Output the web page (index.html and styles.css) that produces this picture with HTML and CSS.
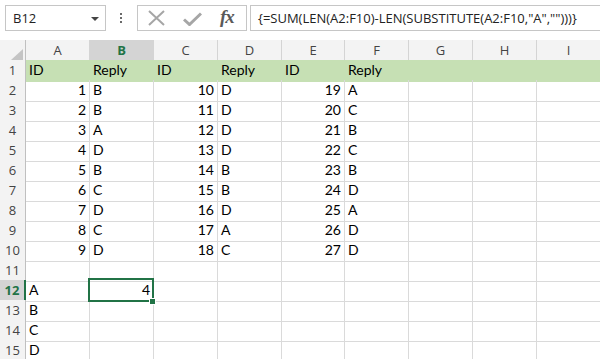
FILE: index.html
```html
<!DOCTYPE html>
<html lang="en">
  <head>
    <meta charset="UTF-8" />
    <title>Book1 - Excel</title>
    <link rel="stylesheet" href="styles.css">
  </head>
  <body>
    <div class="toolbar">
      <div class="name-box">
        <span>B12</span>
        <svg class="caret" width="8" height="4" viewBox="0 0 8 4"><path d="M0 0h8L4 4z" fill="#444"/></svg>
      </div>
      <div class="dots"><i></i><i></i><i></i></div>
      <div class="fx-box">
        <svg class="icon-x" width="17" height="16" viewBox="0 0 17 16">
          <path d="M1 1L16 15M16 1L1 15" stroke="#a6a6a6" stroke-width="2" fill="none"/>
        </svg>
        <svg class="icon-check" width="19" height="14" viewBox="0 0 19 14">
          <path d="M1 7.5L6.5 12.5L18 1.5" stroke="#a6a6a6" stroke-width="3" fill="none"/>
        </svg>
        <span class="fx">fx</span>
      </div>
      <div class="formula">{=SUM(LEN(A2:F10)-LEN(SUBSTITUTE(A2:F10,"A","")))}</div>
    </div>

    <div class="sheet">
      <div class="row head">
        <div class="corner"><svg width="12" height="11" viewBox="0 0 12 11"><path d="M12 0V11H0z" fill="#c4c4c4"/></svg></div>
        <div>A</div><div class="active">B</div><div>C</div><div>D</div><div>E</div><div>F</div><div>G</div><div>H</div><div>I</div>
      </div>
      <div class="row band">
        <div class="rh">1</div>
        <div>ID</div><div>Reply</div><div>ID</div><div>Reply</div><div>ID</div><div>Reply</div><div></div><div></div><div></div>
      </div>
      <div class="row">
        <div class="rh">2</div>
        <div class="n">1</div><div>B</div><div class="n">10</div><div>D</div><div class="n">19</div><div>A</div><div></div><div></div><div></div>
      </div>
      <div class="row">
        <div class="rh">3</div>
        <div class="n">2</div><div>B</div><div class="n">11</div><div>D</div><div class="n">20</div><div>C</div><div></div><div></div><div></div>
      </div>
      <div class="row">
        <div class="rh">4</div>
        <div class="n">3</div><div>A</div><div class="n">12</div><div>D</div><div class="n">21</div><div>B</div><div></div><div></div><div></div>
      </div>
      <div class="row">
        <div class="rh">5</div>
        <div class="n">4</div><div>D</div><div class="n">13</div><div>D</div><div class="n">22</div><div>C</div><div></div><div></div><div></div>
      </div>
      <div class="row">
        <div class="rh">6</div>
        <div class="n">5</div><div>B</div><div class="n">14</div><div>B</div><div class="n">23</div><div>B</div><div></div><div></div><div></div>
      </div>
      <div class="row">
        <div class="rh">7</div>
        <div class="n">6</div><div>C</div><div class="n">15</div><div>B</div><div class="n">24</div><div>D</div><div></div><div></div><div></div>
      </div>
      <div class="row">
        <div class="rh">8</div>
        <div class="n">7</div><div>D</div><div class="n">16</div><div>D</div><div class="n">25</div><div>A</div><div></div><div></div><div></div>
      </div>
      <div class="row">
        <div class="rh">9</div>
        <div class="n">8</div><div>C</div><div class="n">17</div><div>A</div><div class="n">26</div><div>D</div><div></div><div></div><div></div>
      </div>
      <div class="row">
        <div class="rh">10</div>
        <div class="n">9</div><div>D</div><div class="n">18</div><div>C</div><div class="n">27</div><div>D</div><div></div><div></div><div></div>
      </div>
      <div class="row">
        <div class="rh">11</div>
        <div></div><div></div><div></div><div></div><div></div><div></div><div></div><div></div><div></div>
      </div>
      <div class="row">
        <div class="rh active">12</div>
        <div>A</div><div class="n sel">4</div><div></div><div></div><div></div><div></div><div></div><div></div><div></div>
      </div>
      <div class="row">
        <div class="rh">13</div>
        <div>B</div><div></div><div></div><div></div><div></div><div></div><div></div><div></div><div></div>
      </div>
      <div class="row">
        <div class="rh">14</div>
        <div>C</div><div></div><div></div><div></div><div></div><div></div><div></div><div></div><div></div>
      </div>
      <div class="row">
        <div class="rh">15</div>
        <div>D</div><div></div><div></div><div></div><div></div><div></div><div></div><div></div><div></div>
      </div>
    </div>
  </body>
</html>
```

FILE: styles.css
```css
/* Basic styling */
body {
  margin: 0;
  padding: 0;
  background-color: #ffffff;
  font-family: "Open Sans", "Noto Sans", sans-serif;
  overflow: hidden;
  width: 600px;
  height: 359px;
}

/* formula bar */
.toolbar {
  display: flex;
  align-items: flex-start;
  height: 40px;
  padding: 5px 0 0 5px;
  box-sizing: border-box;
  background-color: #ffffff;
}

.name-box {
  width: 101px;
  height: 26px;
  box-sizing: border-box;
  border: 1px solid #c6c6c6;
  display: flex;
  align-items: center;
  justify-content: space-between;
  padding: 0 6px 0 7px;
  font-size: 13px;
  color: #222;
}

.caret {
  margin-top: 1px;
}

.dots {
  width: 3px;
  margin: 8px 14px 0 14px;
  display: flex;
  flex-direction: column;
  gap: 2px;
}

.dots i {
  display: block;
  width: 2px;
  height: 2px;
  background-color: #6a6a6a;
}

.fx-box {
  width: 110px;
  height: 26px;
  box-sizing: border-box;
  border: 1px solid #c6c6c6;
  display: flex;
  align-items: center;
  padding-left: 10px;
}

.icon-x {
  margin-right: 18px;
}

.icon-check {
  margin-right: 18px;
  margin-top: 2px;
}

.fx {
  font-family: "Liberation Serif", serif;
  font-style: italic;
  font-weight: bold;
  font-size: 19px;
  color: #5a5a5a;
  letter-spacing: -1px;
  margin-top: -2px;
}

.formula {
  flex: 1;
  height: 26px;
  box-sizing: border-box;
  border: 1px solid #c6c6c6;
  border-right: none;
  margin-left: 3px;
  padding-left: 7px;
  font-size: 13px;
  line-height: 24px;
  color: #222;
  white-space: nowrap;
}

/* grid */
.row {
  display: grid;
  grid-template-columns: 26px 64px 64px 64px 64px 63px 64px 64px 64px 64px;
  height: 20px;
}

.row > div {
  box-sizing: border-box;
  border-right: 1px solid #dadada;
  border-bottom: 1px solid #dadada;
  font-family: "Lato", "Liberation Sans", sans-serif;
  font-size: 14px;
  line-height: 20px;
  padding: 0 3px;
  color: #000;
  white-space: nowrap;
}

.row > .n {
  text-align: right;
  padding-right: 3px;
}

.head > div {
  background-color: #f3f3f3;
  border-bottom: 1px solid #c0c0c0;
  border-right: 1px solid #d4d4d4;
  font-family: "Open Sans", "Noto Sans", sans-serif;
  font-size: 13px;
  line-height: 21px;
  text-align: center;
  color: #444;
}

.head > .corner {
  border-right: 1px solid #c0c0c0;
  display: flex;
  align-items: flex-end;
  justify-content: flex-end;
  padding: 0 2px 2px 0;
}

.head > .active {
  background-color: #d4d4d4;
  border-bottom: 2px solid #217346;
  color: #217346;
  font-weight: bold;
}

.row > .rh {
  background-color: #f3f3f3;
  border-right: 1px solid #c0c0c0;
  border-bottom: 1px solid #d4d4d4;
  font-family: "Open Sans", "Noto Sans", sans-serif;
  font-size: 13px;
  line-height: 21px;
  text-align: center;
  padding: 0;
  color: #444;
}

.row > .rh.active {
  background-color: #d4d4d4;
  border-right: 2px solid #217346;
  color: #217346;
  font-weight: bold;
}

.band > div:not(.rh) {
  background-color: #c6e0b4;
  border-color: #c6e0b4;
}

/* selected cell */
.sel {
  position: relative;
}

.sel::after {
  content: "";
  position: absolute;
  left: -2px;
  top: -2px;
  right: -1px;
  bottom: -1px;
  border: 2px solid #217346;
}

.sel::before {
  content: "";
  position: absolute;
  right: -3px;
  bottom: -4px;
  width: 5px;
  height: 5px;
  background-color: #217346;
  border: 1px solid #ffffff;
  z-index: 1;
}
```
